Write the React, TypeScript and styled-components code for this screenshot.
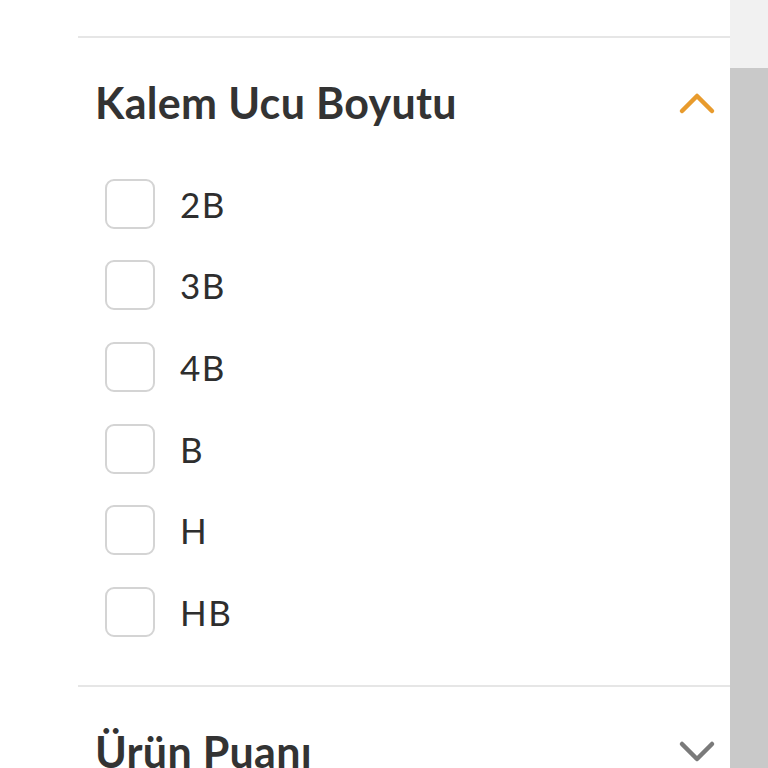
import React, { useState } from 'react';
import styled, { createGlobalStyle } from 'styled-components';

const GlobalStyle = createGlobalStyle`
  html, body {
    margin: 0;
    padding: 0;
    background: #fff;
    overflow: hidden;
  }
  body {
    font-family: Lato, 'Noto Sans', 'Liberation Sans', sans-serif;
    color: #333;
  }
`;

const Page = styled.div`
  display: flex;
  width: 768px;
  height: 768px;
  overflow: hidden;
`;

const Panel = styled.div`
  flex: 1;
  padding-left: 78px;
  background: #fff;
`;

const Scrollbar = styled.div`
  width: 38px;
  display: flex;
  flex-direction: column;
  background: #f1f1f1;
`;

const ScrollTrack = styled.div`
  height: 68px;
  background: #f1f1f1;
`;

const ScrollThumb = styled.div`
  flex: 1;
  background: #c9c9c9;
`;

const PrevTail = styled.div`
  height: 36px;
`;

const Section = styled.section`
  border-top: 2px solid #e6e6e6;
`;

const Header = styled.button`
  all: unset;
  box-sizing: border-box;
  width: 100%;
  display: flex;
  align-items: center;
  justify-content: space-between;
  padding: 40px 14px 35px 17px;
  cursor: pointer;
`;

const Title = styled.h3`
  margin: 0;
  font-family: Lato, 'Noto Sans', sans-serif;
  font-size: 43px;
  font-weight: 700;
  line-height: 50px;
  color: #333;
  letter-spacing: 0.3px;
`;

const Chevron = styled.svg<{ $open: boolean }>`
  width: 38px;
  height: 24px;
  color: ${(p) => (p.$open ? '#e89b2d' : '#7a7a7a')};
`;

const List = styled.ul`
  list-style: none;
  margin: 0;
  padding: 0 0 32px 27px;
`;

const Item = styled.li`
  height: 81.6px;
  display: flex;
  align-items: center;
  gap: 25px;
`;

const Box = styled.span`
  box-sizing: border-box;
  width: 50px;
  height: 50px;
  border: 2px solid #d4d4d4;
  border-radius: 9px;
  background: #fff;
`;

const Label = styled.span`
  font-family: Lato, 'Noto Sans', sans-serif;
  font-size: 35px;
  font-weight: 400;
  color: #2e2e2e;
  letter-spacing: 1.5px;
`;

const ChevronIcon = ({ open }: { open: boolean }) => (
  <Chevron $open={open} viewBox="0 0 38 24" fill="none">
    <path
      d={open ? 'M4 20 L19 5 L34 20' : 'M4 4 L19 19 L34 4'}
      stroke="currentColor"
      strokeWidth={4.5}
      strokeLinecap="round"
      strokeLinejoin="round"
    />
  </Chevron>
);

const sizes = ['2B', '3B', '4B', 'B', 'H', 'HB'];

export default function App() {
  const [open, setOpen] = useState(true);

  return (
    <Page>
      <GlobalStyle />
      <Panel>
        <PrevTail />
        <Section>
          <Header onClick={() => setOpen(!open)}>
            <Title>Kalem Ucu Boyutu</Title>
            <ChevronIcon open={open} />
          </Header>
          {open && (
            <List>
              {sizes.map((s) => (
                <Item key={s}>
                  <Box />
                  <Label>{s}</Label>
                </Item>
              ))}
            </List>
          )}
        </Section>
        <Section>
          <Header>
            <Title>Ürün Puanı</Title>
            <ChevronIcon open={false} />
          </Header>
        </Section>
      </Panel>
      <Scrollbar>
        <ScrollTrack />
        <ScrollThumb />
      </Scrollbar>
    </Page>
  );
}
